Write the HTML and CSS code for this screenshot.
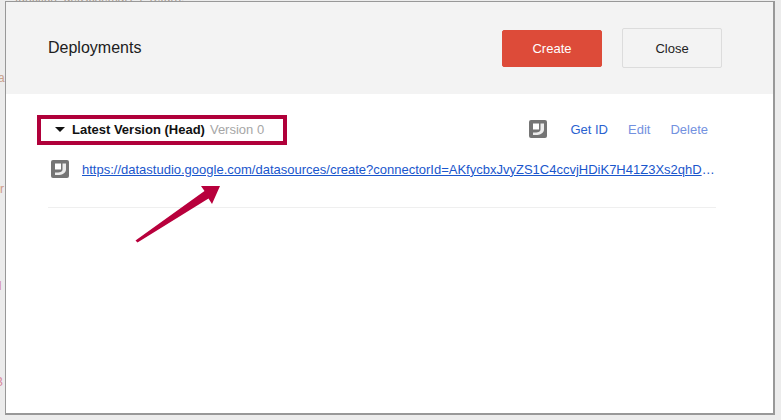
FILE: index.html
```html
<!DOCTYPE html>
<html lang="en">
<head>
<meta charset="utf-8">
<title>Deployments</title>
<link rel="stylesheet" href="styles.css">
</head>
<body>
<div class="backdrop" aria-hidden="true">
  <span class="scrap scrap-top">function  getSchema()  {  return;</span>
  <span class="scrap scrap-a">a:</span>
  <span class="scrap scrap-r">r</span>
  <span class="scrap scrap-h">H</span>
  <span class="scrap scrap-b">B</span>
</div>
<main class="dialog">
  <header class="dialog-head">
    <h1 class="dialog-title">Deployments</h1>
    <div class="dialog-actions">
      <button class="btn btn-primary" type="button">Create</button>
      <button class="btn btn-plain" type="button">Close</button>
    </div>
  </header>
  <section class="dialog-body">
    <div class="version-row">
      <div class="version-label">
        <span class="caret"></span>
        <strong class="version-name">Latest Version (Head)</strong>
        <span class="version-num">Version 0</span>
      </div>
      <div class="version-tools">
        <svg class="ds-icon" viewBox="0 0 18 18"><use href="#ds"/></svg>
        <a class="tool tool-id" href="#">Get ID</a>
        <a class="tool" href="#">Edit</a>
        <a class="tool" href="#">Delete</a>
      </div>
    </div>
    <div class="link-row">
      <svg class="ds-icon" viewBox="0 0 18 18">
        <symbol id="ds" viewBox="0 0 18 18">
          <rect width="18" height="18" rx="2" fill="#757575"/>
          <path d="M4 3.500h6v6H4z" fill="#fff"/>
          <path d="M11.500 3.500H15v6c0 3.500-3.500 5.500-8.500 5.500H4v-2.500c5 0 7.500-.5 7.500-3z" fill="#ececec"/>
        </symbol>
        <use href="#ds"/>
      </svg>
      <a class="deploy-link" href="#">https://datastudio.google.com/datasources/create?connectorId=AKfycbxJvyZS1C4ccvjHDiK7H41Z3Xs2qhDwL9aTnPq0uVbE</a>
    </div>
    <div class="divider"></div>
  </section>
</main>
<div class="highlight"></div>
<svg class="arrow" viewBox="0 0 781 420" width="781" height="420">
  <path d="M135.500 240.500 L204.500 191 L201 186 L220 186 L212 204 L208.500 198.500 L137.500 242.500 Z" fill="#b8003c"/>
</svg>
</body>
</html>
```

FILE: styles.css
```css
* { box-sizing: border-box; }

html, body {
  margin: 0;
  height: 100%;
}

body {
  position: relative;
  width: 781px;
  height: 420px;
  overflow: hidden;
  padding: 1px 6px 5px 5px;
  background: #ececec;
  font-family: "Liberation Sans", Arial, sans-serif;
}

.backdrop {
  position: absolute;
  inset: 0;
}

.scrap {
  position: absolute;
  font-size: 12px;
  line-height: 14px;
  color: #c9a08c;
  white-space: pre;
}
.scrap-top { left: 15px; top: -9px; color: #a89a8c; }
.scrap-a { left: -2px; top: 71px; }
.scrap-r { left: 0; top: 182px; color: #d09a8a; }
.scrap-h { left: -7px; top: 279px; color: #d8879c; }
.scrap-b { left: -5px; top: 375px; color: #d8879c; }

.dialog {
  position: relative;
  width: 770px;
  height: 414px;
  border: solid #989898;
  border-width: 1px 2px 2px 1px;
  background: #fff;
  display: flex;
  flex-direction: column;
}

.dialog-head {
  height: 92px;
  padding: 26px 51px 0 42px;
  background: #f3f3f3;
  display: flex;
  justify-content: space-between;
  align-items: flex-start;
}

.dialog-title {
  margin: 11px 0 0;
  font-size: 16px;
  line-height: 18px;
  font-weight: 400;
  color: #202020;
}

.dialog-actions {
  display: flex;
  align-items: center;
  gap: 20px;
}

.btn {
  width: 100px;
  border-radius: 2px;
  font-family: inherit;
  font-size: 13px;
  padding: 0;
}
.btn-primary {
  height: 37px;
  background: #dd4b39;
  border: 1px solid #dd4b39;
  color: #fff;
}
.btn-plain {
  height: 40px;
  background: #f3f3f3;
  border: 1px solid #dcdcdc;
  color: #222;
}

.dialog-body {
  padding: 26px 57px 0 42px;
}

.version-row {
  display: flex;
  justify-content: space-between;
  align-items: center;
  height: 18px;
  padding-right: 8px;
}

.version-label {
  display: flex;
  align-items: center;
  padding-left: 7px;
  font-size: 13px;
}

.caret {
  width: 0;
  height: 0;
  margin-right: 7px;
  border: solid transparent;
  border-width: 5px 5px 0;
  border-top-color: #111;
}

.version-name {
  color: #111;
  font-weight: 700;
}

.version-num {
  margin-left: 5px;
  color: #a6a6a6;
}

.version-tools {
  display: flex;
  align-items: center;
  font-size: 13px;
}

.ds-icon {
  width: 18px;
  height: 18px;
  flex: none;
}

.tool {
  margin-left: 20px;
  color: #7391e0;
  text-decoration: none;
}
.tool-id {
  margin-left: 23px;
  color: #2a62d0;
}

.link-row {
  display: flex;
  align-items: center;
  height: 18px;
  margin-top: 22px;
  padding-left: 3px;
}

.deploy-link {
  margin-left: 13px;
  min-width: 0;
  flex: 1;
  overflow: hidden;
  white-space: nowrap;
  text-overflow: ellipsis;
  font-size: 13px;
  color: #1a56cc;
}

.divider {
  height: 1px;
  margin-top: 29px;
  background: #efefef;
}

.highlight {
  position: absolute;
  left: 37px;
  top: 115px;
  width: 250px;
  height: 30px;
  border: 4px solid #b0003a;
}

.arrow {
  position: absolute;
  left: 0;
  top: 0;
  pointer-events: none;
}
```
